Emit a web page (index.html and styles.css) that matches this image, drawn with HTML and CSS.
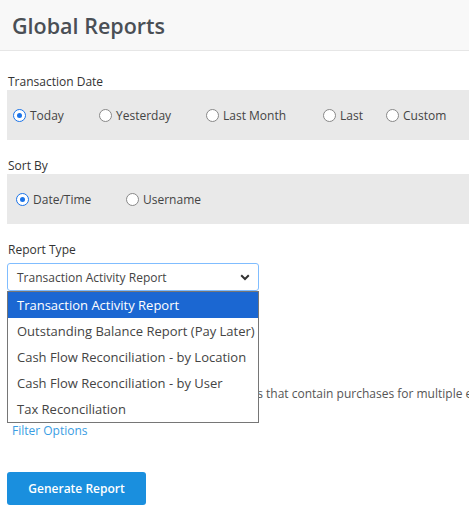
FILE: index.html
```html
<!DOCTYPE html>
<html lang="en">
<head>
    <meta charset="UTF-8">
    <meta name="viewport" content="width=device-width, initial-scale=1.0">
    <title>Global Reports</title>
    <link rel="stylesheet" href="styles.css">
</head>
<body>
    <div class="page-header">
        <h1 class="page-title">Global Reports</h1>
    </div>
    <div class="content">
        <div class="field">
            <div class="field-label">Transaction Date</div>
            <div class="option-box">
                <label class="radio radio-today"><span class="dot checked"></span>Today</label>
                <label class="radio radio-yesterday"><span class="dot"></span>Yesterday</label>
                <label class="radio radio-month"><span class="dot"></span>Last Month</label>
                <label class="radio radio-last"><span class="dot"></span>Last</label>
                <label class="radio"><span class="dot"></span>Custom</label>
            </div>
        </div>

        <div class="field">
            <div class="field-label">Sort By</div>
            <div class="option-box sort-box">
                <label class="radio radio-date"><span class="dot checked"></span>Date/Time</label>
                <label class="radio"><span class="dot"></span>Username</label>
            </div>
        </div>

        <div class="field">
            <div class="field-label">Report Type</div>
            <div class="select-wrap">
                <div class="select">
                    <span>Transaction Activity Report</span>
                    <svg class="caret" width="10" height="7" viewBox="0 0 10 7">
                        <path d="M1.2 1.3 L5 5 L8.8 1.3" fill="none" stroke="#333" stroke-width="2"/>
                    </svg>
                </div>
                <!-- open list of report types -->
                <ul class="select-list">
                    <li class="active">Transaction Activity Report</li>
                    <li>Outstanding Balance Report (Pay Later)</li>
                    <li>Cash Flow Reconciliation - by Location</li>
                    <li>Cash Flow Reconciliation - by User</li>
                    <li>Tax Reconciliation</li>
                </ul>
            </div>
            <div class="check-row">
                <label class="check"><input type="checkbox"> Only include transactions from gift orders that contain purchases for multiple events</label>
            </div>
            <a class="filter-link" href="#">Filter Options</a>
        </div>

        <button class="button">Generate Report</button>
    </div>
</body>
</html>
```

FILE: styles.css
```css
body {
    margin: 0;
    font-family: "Open Sans", Arial, sans-serif;
    font-size: 12px;
    color: #333;
    background-color: white;
    overflow: hidden;
}
.page-header {
    height: 50px;
    background-color: #f8f8f8;
    border-bottom: 1px solid #e6e6e6;
    display: flex;
    align-items: center;
    padding-left: 12px;
}
.page-title {
    margin: 0;
    font-size: 21.5px;
    font-weight: 600;
    color: #4a4f55;
}
.content {
    padding: 23px 0 0 7px;
}
.field-label {
    padding-left: 1px;
    margin-bottom: 1px;
    line-height: 15px;
}
.option-box {
    height: 50px;
    background-color: #e9e9e9;
    display: flex;
    align-items: center;
    padding-left: 6px;
    margin-bottom: 18px;
}
.sort-box {
    padding-left: 9px;
}
.radio {
    display: flex;
    align-items: center;
    gap: 4px;
    color: #444;
}
.radio-today { width: 86px; }
.radio-yesterday { width: 107px; }
.radio-month { width: 117px; }
.radio-last { width: 63px; }
.radio-date { width: 110px; }
.dot {
    width: 11px;
    height: 11px;
    border: 1px solid #888;
    border-radius: 50%;
    background-color: white;
    box-sizing: content-box;
    position: relative;
}
.dot.checked {
    border-color: #1a73e8;
}
.dot.checked::after {
    content: "";
    position: absolute;
    left: 3px;
    top: 3px;
    width: 5px;
    height: 5px;
    border-radius: 50%;
    background-color: #1a73e8;
}
.select-wrap {
    position: relative;
    width: 252px;
    margin-top: 6px;
}
.select {
    height: 26px;
    border: 1px solid #80bdff;
    border-radius: 3px;
    display: flex;
    align-items: center;
    justify-content: space-between;
    padding: 0 8px 0 9px;
    font-size: 12px;
    color: #444;
    background-color: white;
}
.select-list {
    position: absolute;
    left: 0;
    top: 28px;
    width: 250px;
    margin: 0;
    padding: 0;
    list-style: none;
    border: 1px solid #767676;
    background-color: white;
    font-size: 13px;
    color: #444;
    z-index: 2;
}
.select-list li {
    height: 26px;
    line-height: 26px;
    padding-left: 9px;
    white-space: nowrap;
}
.select-list li.active {
    background-color: #1b67d2;
    color: white;
}
.check-row {
    margin-top: 94px;
    white-space: nowrap;
    color: #555;
}
.check input {
    margin: 0 6px 0 1px;
    vertical-align: -2px;
}
.filter-link {
    display: inline-block;
    margin-top: 20px;
    margin-left: 5px;
    color: #3a9de3;
    text-decoration: none;
}
.button {
    display: block;
    margin-top: 33px;
    width: 139px;
    height: 33px;
    border: none;
    border-radius: 3px;
    background-color: #1a8fde;
    color: white;
    font-family: "Open Sans", Arial, sans-serif;
    font-size: 12px;
    font-weight: 600;
    cursor: pointer;
}
```
